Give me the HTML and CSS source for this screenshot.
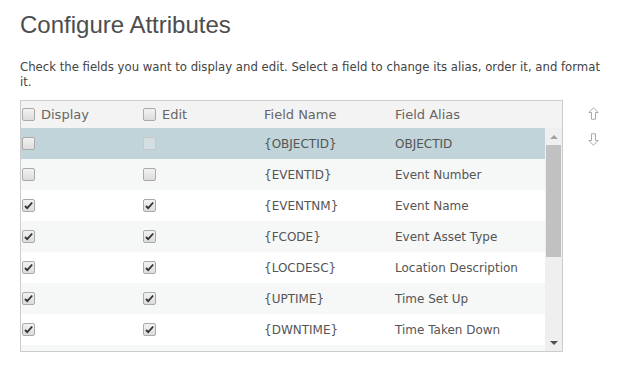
FILE: index.html
```html
<!DOCTYPE html>
<html>
<head>
<meta charset="utf-8">
<link rel="stylesheet" href="styles.css">
</head>
<body>
<div class="page">
  <h1 class="title">Configure Attributes</h1>
  <p class="desc">Check the fields you want to display and edit. Select a field to change its alias, order it, and format it.</p>
  <div class="main">
    <div class="grid">
      <div class="head">
        <div class="c c1"><span class="cb"></span>Display</div>
        <div class="c c2"><span class="cb"></span>Edit</div>
        <div class="c c3">Field Name</div>
        <div class="c c4">Field Alias</div>
      </div>
      <div class="bodywrap">
        <div class="rows">
          <div class="row sel"><div class="c c1"><span class="cb"></span></div><div class="c c2"><span class="cb dis"></span></div><div class="c c3">{OBJECTID}</div><div class="c c4">OBJECTID</div></div>
          <div class="row alt"><div class="c c1"><span class="cb"></span></div><div class="c c2"><span class="cb"></span></div><div class="c c3">{EVENTID}</div><div class="c c4">Event Number</div></div>
          <div class="row"><div class="c c1"><span class="cb on"></span></div><div class="c c2"><span class="cb on"></span></div><div class="c c3">{EVENTNM}</div><div class="c c4">Event Name</div></div>
          <div class="row alt"><div class="c c1"><span class="cb on"></span></div><div class="c c2"><span class="cb on"></span></div><div class="c c3">{FCODE}</div><div class="c c4">Event Asset Type</div></div>
          <div class="row"><div class="c c1"><span class="cb on"></span></div><div class="c c2"><span class="cb on"></span></div><div class="c c3">{LOCDESC}</div><div class="c c4">Location Description</div></div>
          <div class="row alt"><div class="c c1"><span class="cb on"></span></div><div class="c c2"><span class="cb on"></span></div><div class="c c3">{UPTIME}</div><div class="c c4">Time Set Up</div></div>
          <div class="row"><div class="c c1"><span class="cb on"></span></div><div class="c c2"><span class="cb on"></span></div><div class="c c3">{DWNTIME}</div><div class="c c4">Time Taken Down</div></div>
          <div class="row alt"></div>
        </div>
        <div class="sbar">
          <div class="sarrow up"></div>
          <div class="strack"><div class="thumb"></div></div>
          <div class="sarrow down"></div>
        </div>
      </div>
    </div>
    <div class="tools">
      <svg class="tool" width="11" height="13" viewBox="0 0 11 13"><path d="M5.5 0.8 L10.2 5.5 L7.5 5.5 L7.5 12.2 L3.5 12.2 L3.5 5.5 L0.8 5.5 Z" fill="#fff" stroke="#a8a8a8" stroke-width="1"/></svg>
      <svg class="tool" width="11" height="13" viewBox="0 0 11 13"><path d="M5.5 12.2 L10.2 7.5 L7.5 7.5 L7.5 0.8 L3.5 0.8 L3.5 7.5 L0.8 7.5 Z" fill="#fff" stroke="#a8a8a8" stroke-width="1"/></svg>
    </div>
  </div>
</div>
</body>
</html>
```

FILE: styles.css
```css
html, body { margin: 0; padding: 0; background: #fff; }
.page { padding: 0 20px; font-family: "DejaVu Sans", Verdana, sans-serif; color: #555; font-size: 12px; }
.title { margin: 0; padding-top: 10px; font-family: "Liberation Sans", Arial, sans-serif; font-weight: normal; font-size: 24px; line-height: 30px; color: #4d4d4d; }
.desc { margin: 20px 0 0 0; line-height: 15px; font-size: 11.7px; color: #444; width: 595px; }
.main { display: flex; margin-top: 10px; }
.grid { width: 541px; height: 250px; border: 1px solid #ccc; display: flex; flex-direction: column; overflow: hidden; }
.head { display: flex; height: 27px; align-items: center; background: #f3f3f3; flex: none; font-size: 13px; color: #666; }
.bodywrap { flex: 1; display: flex; overflow: hidden; }
.rows { flex: 1; }
.row { display: flex; height: 31px; align-items: center; background: #fff; font-size: 12px; color: #555; }
.row.alt { background: #f6f7f7; }
.row.sel { background: #c0d4d9; }
.c { display: flex; align-items: center; }
.c1 { width: 121px; padding-left: 1px; }
.c2 { width: 121px; }
.c3 { width: 131px; }
.c4 { flex: 1; }
.cb { width: 11px; height: 11px; border: 1px solid #aaa; border-radius: 2px; background: linear-gradient(#f2f2f2, #dcdcdc); margin-right: 6px; display: inline-block; box-sizing: content-box; }
.cb.dis { border-color: #c8c8c8; background: #d3dfe2; }
.cb.on { background-image: url("data:image/svg+xml;utf8,<svg xmlns='http://www.w3.org/2000/svg' width='11' height='11' viewBox='0 0 11 11'><path d='M2 6 L4.2 8.2 L9.2 2.5' fill='none' stroke='%23333' stroke-width='1.8'/></svg>"), linear-gradient(#f2f2f2, #dcdcdc); background-repeat: no-repeat; }
.sbar { width: 17px; background: #efefef; display: flex; flex-direction: column; flex: none; }
.sarrow { height: 17px; flex: none; display: flex; align-items: center; justify-content: center; }
.sarrow.up::before { content: ""; border-left: 4px solid transparent; border-right: 4px solid transparent; border-bottom: 4px solid #a3a3a3; }
.sarrow.down::before { content: ""; border-left: 4px solid transparent; border-right: 4px solid transparent; border-top: 4px solid #505050; }
.strack { flex: 1; padding: 0 1px; }
.thumb { height: 112px; background: #c1c1c1; }
.tools { display: flex; flex-direction: column; gap: 13px; padding-left: 25px; padding-top: 7px; }
```
